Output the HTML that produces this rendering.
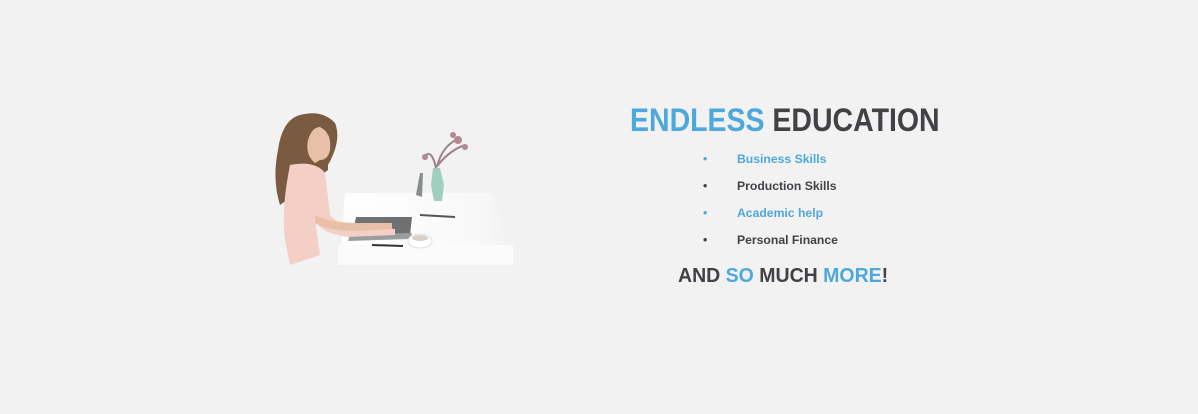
<!DOCTYPE html>
<html><head><meta charset="utf-8"><style>
html,body{margin:0;padding:0;}
body{width:1198px;height:414px;background:#f2f2f2;position:relative;overflow:hidden;font-family:"Liberation Sans",sans-serif;}
.b{color:#4ea8dc}.d{color:#404246}
.t{position:absolute;left:630px;top:101px;font-size:32px;font-weight:bold;white-space:nowrap;line-height:38px;transform:scaleX(0.89);transform-origin:0 0}
.li{position:absolute;left:703px;font-size:12.2px;font-weight:bold;line-height:16px;white-space:nowrap}
.li span{position:absolute;left:34px}
.m{position:absolute;left:678px;top:263px;font-size:20px;font-weight:bold;line-height:26px;white-space:nowrap;transform:scaleX(0.975);transform-origin:0 0}
</style></head><body>
<svg style="position:absolute;left:260px;top:105px" width="270" height="170" viewBox="0 0 270 170">
<defs><linearGradient id="tb" x1="0" x2="1"><stop offset="0" stop-color="#fff"/><stop offset="0.8" stop-color="#f8f8f8"/><stop offset="1" stop-color="#f2f2f2"/></linearGradient></defs>
<polygon points="85,88 235,88 250,160 80,160" fill="url(#tb)"/>
<rect x="78" y="140" width="175" height="20" fill="#fbfbfb"/>
<polygon points="160,68 163,68 162,92 156,90" fill="#8a8d90"/>
<polygon points="96,112 152,112 150,130 92,132" fill="#6e7072"/>
<polygon points="90,130 152,128 150,134 88,136" fill="#9a9c9e"/>
<path d="M173,63 L180,63 L184,80 L182,96 L174,96 L171,80 Z" fill="#9fcfc0"/>
<path d="M176,63 Q172,45 166,50 M177,62 Q182,40 200,33 M178,60 Q190,45 205,40" stroke="#a08088" stroke-width="2" fill="none"/>
<circle cx="165" cy="52" r="3" fill="#b08a90"/><circle cx="198" cy="35" r="4" fill="#b08a90"/><circle cx="205" cy="42" r="3" fill="#b08a90"/><circle cx="193" cy="30" r="3" fill="#b08a90"/>
<line x1="160" y1="110" x2="195" y2="112" stroke="#555" stroke-width="2"/>
<ellipse cx="160" cy="136" rx="12" ry="7" fill="#fff" stroke="#e0e0e0"/>
<ellipse cx="160" cy="133" rx="8" ry="3" fill="#d8cfc8"/>
<line x1="112" y1="140" x2="143" y2="141" stroke="#333" stroke-width="2"/>
<path d="M40,10 Q62,4 75,18 Q82,35 68,60 L68,65 L20,100 Q12,75 18,45 Q22,15 40,10 Z" fill="#7a5a40"/>
<path d="M60,22 Q72,28 70,45 Q68,55 60,55 L55,58 Q45,50 48,35 Q52,22 60,22 Z" fill="#e8c0a8"/>
<path d="M30,60 Q55,55 65,68 L70,110 Q80,120 88,120 L135,124 L135,130 L88,132 Q60,128 55,115 L60,150 L30,160 L26,140 Q20,110 30,60 Z" fill="#f3cfc6"/>
<path d="M55,110 Q70,118 100,118 L132,118 L132,124 L98,126 Q68,126 55,118 Z" fill="#e8c0a8"/>
</svg>
<div class="t"><span class="b">ENDLESS</span> <span class="d">EDUCATION</span></div>
<div class="li b" style="top:151px">•<span>Business Skills</span></div>
<div class="li d" style="top:178px">•<span>Production Skills</span></div>
<div class="li b" style="top:205px">•<span>Academic help</span></div>
<div class="li d" style="top:232px">•<span>Personal Finance</span></div>
<div class="m"><span class="d">AND </span><span class="b">SO</span><span class="d"> MUCH </span><span class="b">MORE</span><span class="d">!</span></div>
</body></html>
